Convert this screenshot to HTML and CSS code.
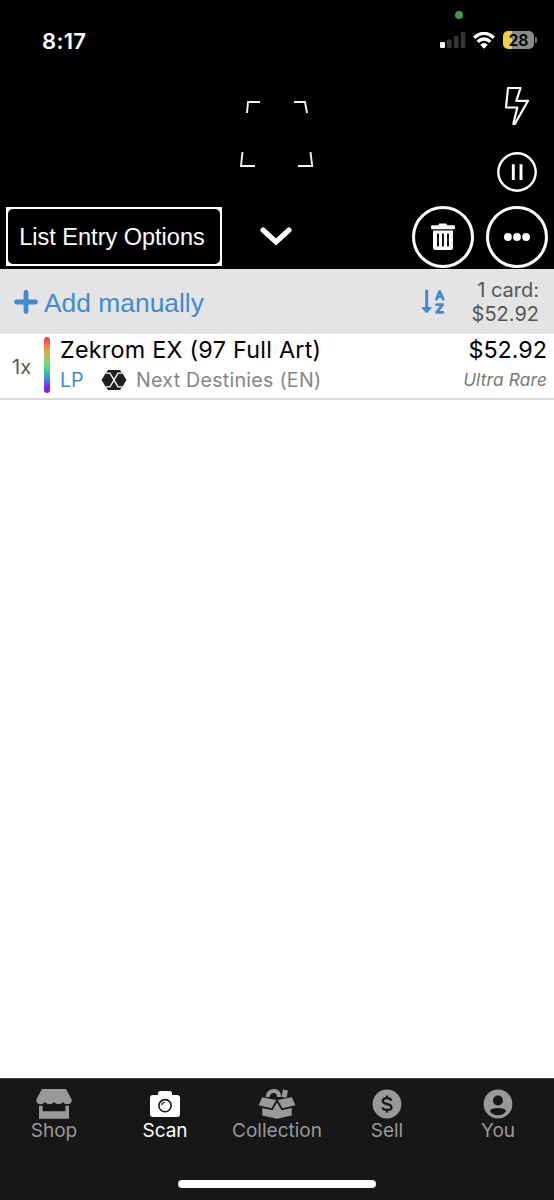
FILE: index.html
```html
<!DOCTYPE html>
<html lang="en">
<head>
<meta charset="utf-8">
<title>Scan</title>
<link rel="stylesheet" href="styles.css">
</head>
<body>
<div class="screen">
  <section class="camera">
    <header class="status">
      <span class="clock">8:17</span>
      <span class="camera-dot"></span>
      <div class="indicators">
        <svg class="signal" width="26" height="16" viewBox="0 0 26 16"><rect x="0" y="10" width="5" height="6" rx="1.3" fill="#fff"/><rect x="7" y="7.5" width="4.5" height="8.5" rx="1.2" fill="#353535"/><rect x="14" y="4" width="4.5" height="12" rx="1.2" fill="#353535"/><rect x="20.8" y="0" width="4.5" height="16" rx="1.2" fill="#353535"/></svg>
        <svg class="wifi" width="22" height="17" viewBox="0 0 22 17"><g fill="none" stroke="#fff" stroke-width="3.3"><path d="M1.2 5.7Q11-3 20.8 5.7"/><path d="M4.7 9.8Q11 4 17.3 9.8"/></g><path d="M7.2 12.8Q11 9.4 14.8 12.8L11 16.7Z" fill="#fff"/></svg>
        <span class="battery">28</span><span class="battery-tip"></span>
      </div>
    </header>
    <div class="finder">
      <svg class="reticle" width="76" height="70" viewBox="0 0 76 70" fill="none" stroke="#f4f4f4" stroke-width="1.9"><path d="M8 14L9 3H21M55 3H66L68 14M3.5 53L2 67H16M59 67H73.2L71.5 53"/></svg>
      <div class="tools">
        <svg width="26" height="42" viewBox="0 0 26 42" fill="none" stroke="#fff" stroke-width="2.2" stroke-linejoin="round"><path d="M4 2H16.5L12.3 14.8H24L10.8 38H9.3L13.3 21.5H2Z"/></svg>
        <svg class="pause" width="42" height="42" viewBox="0 0 42 42" fill="none" stroke="#fff"><circle cx="21" cy="21" r="18.7" stroke-width="2.4"/><path d="M17.3 13.3V29M25 13.3V29" stroke-width="2.9"/></svg>
      </div>
    </div>
    <div class="actions">
      <button class="options"><span>List Entry Options</span></button>
      <svg class="chevron" width="32" height="20" viewBox="0 0 32 20"><path d="M3 3L16 15L29 3" fill="none" stroke="#fff" stroke-width="5.2" stroke-linecap="round"/></svg>
      <button class="round trash">
        <svg width="26" height="28" viewBox="0 0 26 28"><rect x="8.5" y=".5" width="8.5" height="4" rx="1.4" fill="#fff"/><rect x="1" y="2.2" width="24" height="4" rx="1.2" fill="#fff"/><path d="M3 7.5H23V24.5Q23 27 20.5 27H5.5Q3 27 3 24.5Z" fill="#fff"/><path d="M8 10.5V23.5M13 10.5V23.5M18 10.5V23.5" stroke="#000" stroke-width="1.8"/></svg>
      </button>
      <button class="round">
        <svg width="26" height="8" viewBox="0 0 26 8" fill="#fff"><circle cx="3.9" cy="4" r="3.9"/><circle cx="13" cy="4" r="3.9"/><circle cx="22.1" cy="4" r="3.9"/></svg>
      </button>
    </div>
  </section>

  <section class="toolbar">
    <svg width="24" height="24" viewBox="0 0 24 24"><path d="M12 2.5V21.5M2.5 12H21.5" stroke="#418ccc" stroke-width="4.8" stroke-linecap="round"/></svg>
    <span class="add">Add manually</span>
    <svg class="sort" width="24" height="26" viewBox="0 0 24 26" fill="none" stroke="#418ccc" stroke-linejoin="round" stroke-linecap="round"><path d="M5.7 2V20" stroke-width="3"/><path d="M1.8 18.8H9.6L5.7 23.2Z" fill="#418ccc" stroke-width="1.8"/><path d="M15.4 10.3L18.5 2.4H18.9L22.2 10.3M16.8 8H20.8" stroke-width="2.7"/><path d="M15.6 15.7H21.7L15.6 23.3H22" stroke-width="2.8"/></svg>
    <div class="total"><span>1 card:</span><span>$52.92</span></div>
  </section>

  <section class="card">
    <span class="qty">1x</span>
    <span class="rainbow"></span>
    <div class="details">
      <div class="name">Zekrom EX (97 Full Art)</div>
      <div class="meta">
        <span class="condition">LP</span>
        <svg width="26" height="22" viewBox="0 0 26 22"><path d="M7 1H19L21.5 4.5L25.5 11L21.5 17.5L19 21H7L4.5 17.5L.5 11L4.5 4.5Z" fill="#202023"/><path d="M5 4.2H9L17 17.8H21M21 4.2H17L9 17.8H5" fill="none" stroke="#fff" stroke-width="1.3"/></svg>
        <span class="set">Next Destinies (EN)</span>
      </div>
    </div>
    <div class="value"><div class="price">$52.92</div><div class="rarity">Ultra Rare</div></div>
  </section>

  <main class="empty"></main>

  <nav class="tabs">
    <div class="tab">
      <svg width="38" height="32" viewBox="0 0 38 32" fill="#999"><path d="M7 1H31L36.7 11.5Q37 16 32.7 16.2Q29.5 16.2 28 14.2Q26 16.2 23.5 16.2Q21 16.2 19 14.2Q17 16.2 14.5 16.2Q12 16.2 10 14.2Q8 16.2 5.3 16.2Q1 16 1.3 11.5Z"/><path d="M4 17.8H7.6V23.2H30.4V17.8H34V30.8H4Z"/></svg>
      <span>Shop</span>
    </div>
    <div class="tab active">
      <svg width="38" height="32" viewBox="0 0 38 32"><path d="M7 7H12V5.5Q12 3 14.5 3H23.5Q26 3 26 5.5V7H31Q34 7 34 10V26Q34 29 31 29H7Q4 29 4 26V10Q4 7 7 7Z" fill="#fff"/><circle cx="19" cy="17.7" r="6.1" fill="none" stroke="#171717" stroke-width="1.6"/><path d="M15.7 17.3Q15.9 14.4 18.8 14.3" fill="none" stroke="#171717" stroke-width="1.1"/></svg>
      <span>Scan</span>
    </div>
    <div class="tab collection">
      <svg width="38" height="32" viewBox="0 0 38 32" fill="#999"><path d="M9.5 9Q10.5 3 16 3Q21 3 21 9" fill="none" stroke="#999" stroke-width="4"/><path d="M25 1.5L30 2.5L28.5 9.8L23.5 9Z"/><path d="M4.2 9.2L18.3 12L13.5 20.2L.6 17.3ZM33.8 9.2L19.7 12L24.5 20.2L37.4 17.3Z"/><path d="M4.3 20L14.4 22.3L19 14.5L23.6 22.3L33.7 20V27.5L19 30.7L4.3 27.5Z"/></svg>
      <span>Collection</span>
    </div>
    <div class="tab sell">
      <svg width="38" height="32" viewBox="0 0 38 32"><circle cx="19" cy="16" r="14.4" fill="#999"/><path d="M23.2 12.7Q22.6 10.2 19 10.2Q14.8 10.2 14.8 13Q14.8 15.2 19 16Q23.5 16.9 23.5 19.3Q23.5 22 19 22Q15 22 14.5 19.4M19 7.5V10.2M19 22V24.7" fill="none" stroke="#171717" stroke-width="2.3"/></svg>
      <span>Sell</span>
    </div>
    <div class="tab you">
      <svg width="38" height="32" viewBox="0 0 38 32"><circle cx="19" cy="16" r="14.4" fill="#999"/><g fill="#171717"><circle cx="19" cy="12.5" r="5"/><path d="M10.8 23Q12 20 19 20Q26 20 27.2 23Q24.5 27.2 19 27.2Q13.5 27.2 10.8 23Z"/></g></svg>
      <span>You</span>
    </div>
    <span class="home-bar"></span>
  </nav>
</div>
</body>
</html>
```

FILE: styles.css
```css
* { box-sizing: border-box; }
body { margin: 0; background: #fff; font-family: Inter, "Liberation Sans", sans-serif; }
svg { display: block; flex: none; }
button { appearance: none; padding: 0; color: #fff; background: #000; }
span { white-space: nowrap; }

.screen { width: 554px; height: 1200px; display: flex; flex-direction: column; overflow: hidden; }

.camera { height: 269px; flex: none; background: #000; color: #fff; }
.status { position: relative; height: 82px; padding: 0 17px 0 42px; display: flex; justify-content: space-between; }
.clock { margin-top: 27px; font-size: 22px; line-height: 28px; font-weight: 600; letter-spacing: 0.3px; }
.camera-dot { position: absolute; left: 455px; top: 11px; width: 8px; height: 8px; border-radius: 50%; background: #429a48; }
.indicators { height: 20px; margin-top: 30px; display: flex; align-items: center; }
.wifi { margin-left: 7px; }
.battery { width: 31px; height: 18px; margin-left: 8px; border-radius: 5px; background: linear-gradient(to right, #f4cf42 0 9px, #8b8b8b 9px); color: #000; font-size: 16px; line-height: 18px; font-weight: 600; text-align: center; }
.battery-tip { width: 2px; height: 6px; margin-left: 1px; border-radius: 0 2px 2px 0; background: #777; }

.finder { height: 124px; display: flex; justify-content: space-between; padding: 0 16px 0 239px; }
.reticle { margin-top: 17px; }
.tools { width: 42px; display: flex; flex-direction: column; align-items: center; padding-top: 4px; gap: 23px; }

.actions { height: 63px; display: flex; align-items: flex-start; padding-left: 6px; }
.options { width: 216px; height: 59px; margin-top: 1px; border: 0; background: #fff; padding: 2px; }
.options span { display: block; height: 55px; padding-right: 4px; border-radius: 5px; background: #000; font: 23.5px/57px "Liberation Sans", sans-serif; }
.chevron { margin: 21px 0 0 38px; }
.round { width: 62px; height: 62px; margin-left: 12px; border: 3px solid #fff; border-radius: 50%; display: flex; align-items: center; justify-content: center; }
.trash { margin-left: 120px; }

.toolbar { height: 65px; flex: none; display: flex; align-items: center; padding: 0 15px 0 14px; background: #e4e4e4; }
.add { margin-left: 6px; margin-top: 2px; color: #418ccc; font: 26.4px/32px "Liberation Sans", sans-serif; }
.sort { margin-left: auto; }
.total { width: 94px; display: flex; flex-direction: column; align-items: flex-end; color: #555; font-size: 20px; line-height: 24px; }

.card { height: 66px; flex: none; display: flex; padding-right: 7px; border-bottom: 2px solid #d9d9d9; }
.qty { width: 44px; padding: 21px 0 0 12px; color: #555; font-size: 20px; line-height: 24px; }
.rainbow { width: 6px; height: 56px; margin: 3px 10px 0 0; border-radius: 3px; background: linear-gradient(#ef3954, #f49b43 22%, #67e578 47%, #42ca9d 61%, #4387e9 75%, #8a17f5 93%); }
.name, .price { height: 32px; color: #000; font-size: 23.3px; line-height: 32px; }
.name { letter-spacing: 0.28px; }
.meta { display: flex; align-items: center; height: 28px; font-size: 19.6px; }
.condition { width: 41px; color: #418ccc; }
.set { margin-left: 9px; color: #858585; letter-spacing: 0.27px; }
.value { margin-left: auto; text-align: right; }
.rarity { color: #777; font-size: 17.2px; line-height: 28px; font-style: italic; letter-spacing: 0.2px; }

.empty { flex: 1; }
.tabs { position: relative; height: 122px; flex: none; display: grid; grid-template-columns: 108px 114px 110px 110px 112px; align-items: start; padding-top: 9px; background: #171717; border-top: 1px solid #444; color: #999; font-size: 19px; line-height: 22px; }
.tab { display: flex; flex-direction: column; align-items: center; }
.active { color: #fff; }
.home-bar { position: absolute; left: 178px; bottom: 12px; width: 198px; height: 8px; border-radius: 4px; background: #fff; }
```
